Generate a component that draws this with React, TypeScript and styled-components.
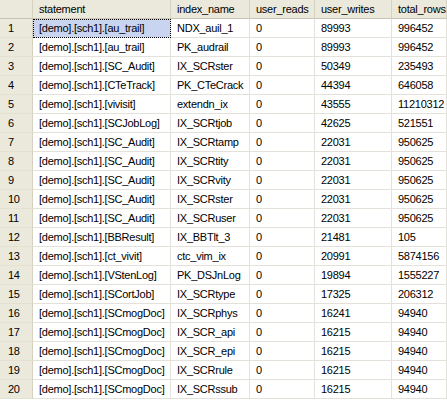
import React from "react";
import styled, { createGlobalStyle } from "styled-components";

const Global = createGlobalStyle`
  html, body { margin: 0; padding: 0; background: #ffffff; }
  body { font-family: Tahoma, "Liberation Sans", Arial, sans-serif; }
`;

const Grid = styled.div`
  display: grid;
  grid-template-columns: 33px 138px 79px 65px 77px 1fr;
  grid-auto-rows: 19px;
  width: 447px;
  height: 400px;
  overflow: hidden;
  background: #ffffff;
  font-size: 11px;
  letter-spacing: -0.25px;
  color: #000000;
`;

const HeadCell = styled.div`
  background: #ebe9dc;
  border-right: 1px solid #d6d2c2;
  border-bottom: 1px solid #c7c4b4;
  padding-left: 6px;
  display: flex;
  align-items: center;
  white-space: nowrap;
  overflow: hidden;
  height: 18px;
`;

const RowHead = styled.div`
  background: #ebe9dc;
  border-right: 1px solid #d6d2c2;
  border-bottom: 1px solid #e4e1d3;
  padding-left: 8px;
  display: flex;
  align-items: center;
`;

const Cell = styled.div<{ $selected?: boolean }>`
  background: ${(p) => (p.$selected ? "#c9d5f0" : "#ffffff")};
  border-right: 1px solid #e3e1d9;
  border-bottom: 1px solid #e3e1d9;
  outline: ${(p) => (p.$selected ? "1px dotted #000" : "none")};
  outline-offset: -1px;
  padding-left: 6px;
  display: flex;
  align-items: center;
  white-space: nowrap;
  overflow: hidden;
`;

const rows: [string, string, string, string, string][] = [
  ["[demo].[sch1].[au_trail]", "NDX_auil_1", "0", "89993", "996452"],
  ["[demo].[sch1].[au_trail]", "PK_audrail", "0", "89993", "996452"],
  ["[demo].[sch1].[SC_Audit]", "IX_SCRster", "0", "50349", "235493"],
  ["[demo].[sch1].[CTeTrack]", "PK_CTeCrack", "0", "44394", "646058"],
  ["[demo].[sch1].[vivisit]", "extendn_ix", "0", "43555", "11210312"],
  ["[demo].[sch1].[SCJobLog]", "IX_SCRtjob", "0", "42625", "521551"],
  ["[demo].[sch1].[SC_Audit]", "IX_SCRtamp", "0", "22031", "950625"],
  ["[demo].[sch1].[SC_Audit]", "IX_SCRtity", "0", "22031", "950625"],
  ["[demo].[sch1].[SC_Audit]", "IX_SCRvity", "0", "22031", "950625"],
  ["[demo].[sch1].[SC_Audit]", "IX_SCRster", "0", "22031", "950625"],
  ["[demo].[sch1].[SC_Audit]", "IX_SCRuser", "0", "22031", "950625"],
  ["[demo].[sch1].[BBResult]", "IX_BBTlt_3", "0", "21481", "105"],
  ["[demo].[sch1].[ct_vivit]", "ctc_vim_ix", "0", "20991", "5874156"],
  ["[demo].[sch1].[VStenLog]", "PK_DSJnLog", "0", "19894", "1555227"],
  ["[demo].[sch1].[SCortJob]", "IX_SCRtype", "0", "17325", "206312"],
  ["[demo].[sch1].[SCmogDoc]", "IX_SCRphys", "0", "16241", "94940"],
  ["[demo].[sch1].[SCmogDoc]", "IX_SCR_api", "0", "16215", "94940"],
  ["[demo].[sch1].[SCmogDoc]", "IX_SCR_epi", "0", "16215", "94940"],
  ["[demo].[sch1].[SCmogDoc]", "IX_SCRrule", "0", "16215", "94940"],
  ["[demo].[sch1].[SCmogDoc]", "IX_SCRssub", "0", "16215", "94940"],
];

const headers = ["", "statement", "index_name", "user_reads", "user_writes", "total_rows"];

export default function App() {
  return (
    <>
      <Global />
      <Grid>
        {headers.map((h, i) => (
          <HeadCell key={"h" + i}>{h}</HeadCell>
        ))}
        {rows.map((r, i) => (
          <React.Fragment key={i}>
            <RowHead>{i + 1}</RowHead>
            {r.map((c, j) => (
              <Cell key={j} $selected={i === 0 && j === 0}>
                {c}
              </Cell>
            ))}
          </React.Fragment>
        ))}
      </Grid>
    </>
  );
}
